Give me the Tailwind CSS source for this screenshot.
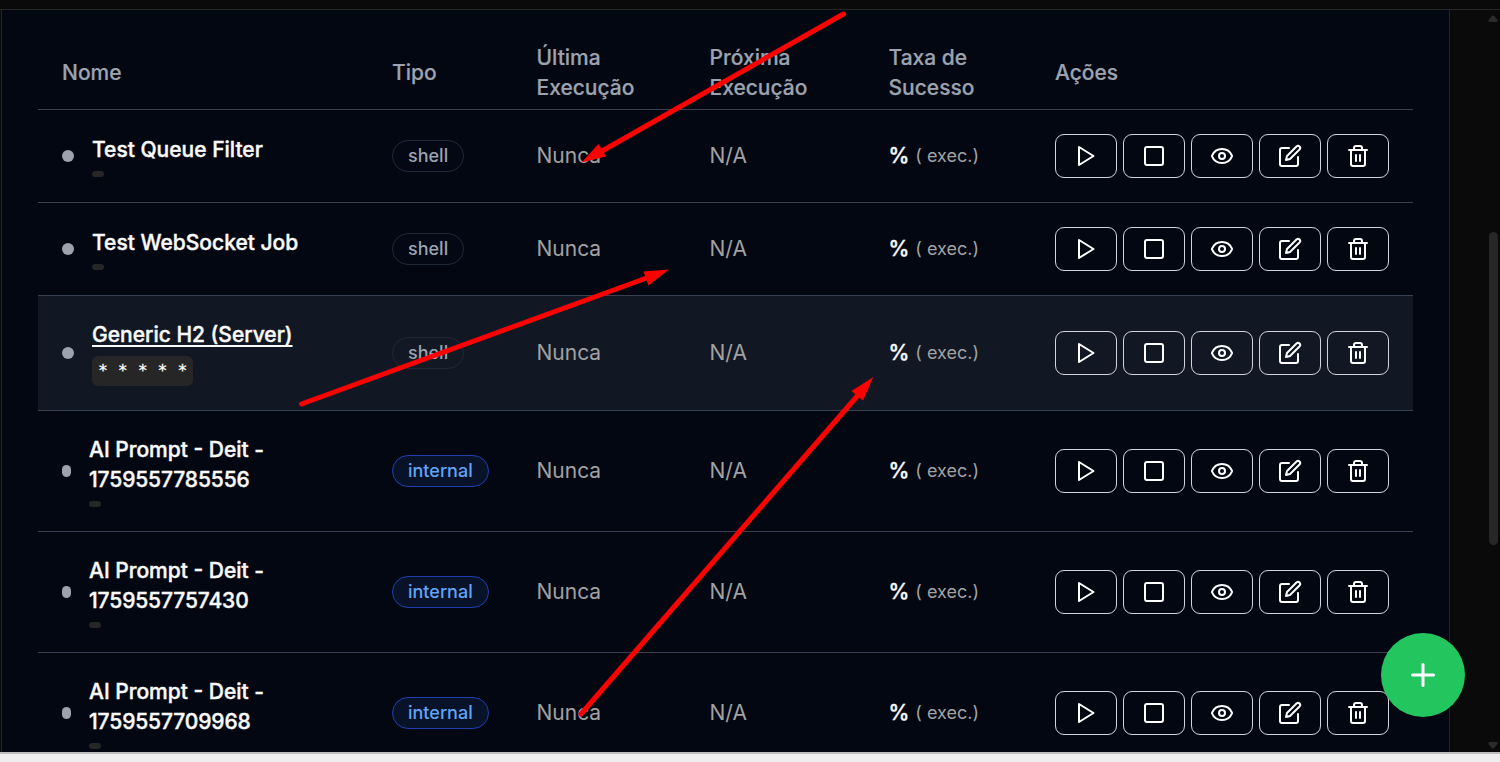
<!DOCTYPE html>
<html lang="pt-BR">
<head>
<meta charset="utf-8">
<title>Jobs</title>
<script src="https://cdn.jsdelivr.net/npm/@tailwindcss/browser@4"></script>
</head>
<body class="relative h-[762px] w-[1500px] overflow-hidden bg-[#0a0a0a] font-['Inter',sans-serif] text-[21px] leading-[30px] text-[#fafafa]">
<svg class="hidden">
  <g fill="none" stroke="currentColor" stroke-width="2" stroke-linecap="round" stroke-linejoin="round">
    <symbol id="play" viewBox="0 0 24 24"><polygon points="5 3 19.500 12 5 21 5 3"/></symbol>
    <symbol id="stop" viewBox="0 0 24 24"><rect width="18" height="18" x="3" y="3" rx="2"/></symbol>
    <symbol id="eye" viewBox="0 0 24 24"><path d="M2.062 12.348a1 1 0 0 1 0-.696 10.75 10.75 0 0 1 19.876 0 1 1 0 0 1 0 .696 10.75 10.75 0 0 1-19.876 0"/><circle cx="12" cy="12" r="3"/></symbol>
    <symbol id="edit" viewBox="0 0 24 24"><path d="M11 4H4a2 2 0 0 0-2 2v14a2 2 0 0 0 2 2h14a2 2 0 0 0 2-2v-7"/><path d="M18.500 2.500a2.121 2.121 0 0 1 3 3L12 15l-4 1 1-4Z"/></symbol>
    <symbol id="trash" viewBox="0 0 24 24"><path d="M3 6h18"/><path d="M19 6v14c0 1-1 2-2 2H7c-1 0-2-1-2-2V6"/><path d="M8 6V4c0-1 1-2 2-2h4c1 0 2 1 2 2v2"/><path d="M10 11v6"/><path d="M14 11v6"/></symbol>
  </g>
</svg>

<div class="flex h-[752px] flex-col overflow-hidden">
  <div class="h-[10px] shrink-0 border-b border-[#262628]"></div>
  <div class="flex h-[742px]">
    <main class="ml-px w-[1449px] shrink-0 overflow-hidden border-x border-[#1f242e] bg-[#030712] px-9 pt-[27px]">
      <div class="grid h-[73px] w-[1375px] grid-cols-[330px_144.5px_173px_179px_166.500px_382px] items-center border-b border-[#374151] font-medium text-[#9ca3af] [-webkit-text-stroke:0.2px]">
        <div class="px-6">Nome</div>
        <div class="px-6">Tipo</div>
        <div class="px-6">Última<br>Execução</div>
        <div class="px-6">Próxima<br>Execução</div>
        <div class="px-6">Taxa de<br>Sucesso</div>
        <div class="px-6">Ações</div>
      </div>
      <div id="rows"></div>
    </main>
    <div class="flex-1"></div>
    <div class="mr-px flex w-3 flex-col items-center pt-[5px] pb-[3px]">
      <svg class="h-[7px] w-[10px] shrink-0" viewBox="0 0 10 7"><path d="M4 .8Q5 0 6 .8L9.5 5Q10 7 8.500 7H1.500Q0 7 .5 5Z" fill="#2b2b2b"/></svg>
      <div class="mt-[210px] h-[313px] w-[9px] shrink-0 rounded-full bg-[#272727]"></div>
      <svg class="mt-auto h-[7px] w-[10px] shrink-0 rotate-180" viewBox="0 0 10 7"><path d="M4 .8Q5 0 6 .8L9.500 5Q10 7 8.500 7H1.500Q0 7 .5 5Z" fill="#2b2b2b"/></svg>
    </div>
  </div>
</div>
<footer class="h-[10px] border-t-2 border-[#bdbdbd] bg-[#eeeeee]"></footer>

<button class="absolute left-[1381px] top-[633px] flex size-[84px] items-center justify-center rounded-full bg-[#22c55e] text-white">
  <svg class="size-9" viewBox="0 0 24 24" fill="none" stroke="currentColor" stroke-width="2" stroke-linecap="round"><path d="M5 12h14M12 5v14"/></svg>
</button>

<svg class="pointer-events-none absolute left-0 top-0 h-[762px] w-[1500px]" viewBox="0 0 1500 762" fill="#ff0000" stroke="#ff0000" stroke-width="5" stroke-linecap="round">
  <path d="M843.500 14L602 151M301.500 404L648 277.500M581 714L859 394"/>
  <path stroke="none" d="M581.500 162.500L598.500 144L606 156.500ZM669 269.500L643.500 271.500L648.500 285.500ZM873.300 377L851.500 391L863 400.500Z"/>
</svg>

<script>
const jobs = [
  { name: 'Test Queue Filter', type: 'shell', height: 93 },
  { name: 'Test WebSocket Job', type: 'shell', height: 93 },
  { name: 'Generic H2 (Server)', type: 'shell', height: 115, cron: '* * * * *', hover: true },
  { name: 'AI Prompt - Deit -', id: '1759557785556', type: 'internal', height: 121 },
  { name: 'AI Prompt - Deit -', id: '1759557757430', type: 'internal', height: 121 },
  { name: 'AI Prompt - Deit -', id: '1759557709968', type: 'internal', height: 121 },
];
const badge = {
  shell: 'border-[#1f2937] bg-[#6b7280]/2 text-[#9ca3af]',
  internal: 'border-[#1e40af] bg-[#3b82f6]/10 text-[#60a5fa]',
};
const actions = ['play', 'stop', 'eye', 'edit', 'trash'].map(i =>
  `<button class="flex h-11 w-[62px] items-center justify-center rounded-[9px] border border-[#d1d5db] text-white"><svg class="size-6" fill="none" stroke="currentColor" stroke-width="2" stroke-linecap="round" stroke-linejoin="round"><use href="#${i}"/></svg></button>`).join('');
document.getElementById('rows').innerHTML = jobs.map(j => `
  <div class="grid w-[1375px] grid-cols-[330px_144.5px_173px_179px_166.500px_382px] items-center border-b border-[#374151] ${j.hover ? 'bg-[#111823]' : ''}" style="height:${j.height}px">
    <div class="flex items-center gap-[18px] px-6">
      <span class="h-3 shrink-0 rounded-full bg-[#9ca3af] ${j.id ? 'w-[9px]' : 'w-3'}"></span>
      <div class="whitespace-nowrap">
        <div class="font-medium [-webkit-text-stroke:0.4px] ${j.hover ? 'underline underline-offset-[3px] decoration-[1.500px] [text-decoration-skip-ink:none]' : ''}">${j.name}${j.id ? `<br><span class="tracking-[-0.12px]">${j.id}</span>` : ''}</div>
        ${j.cron
          ? `<code class="mt-1.5 block h-[30px] w-[101px] rounded-md bg-[#262626] px-1.5 pt-[3px] font-['DejaVu_Sans_Mono',monospace] text-[16.5px] leading-6 [-webkit-text-stroke:0.3px]">${j.cron}</code>`
          : `<code class="mt-1.5 block h-1.5 w-3 rounded-[3px] bg-[#262626]"></code>`}
      </div>
    </div>
    <div class="flex px-6"><span class="h-8 rounded-full border px-[15px] text-[18px] leading-[30px] font-medium ${badge[j.type]}">${j.type}</span></div>
    <div class="px-6 text-[#a1a1a1]">Nunca</div>
    <div class="px-6 text-[#a1a1a1]">N/A</div>
    <div class="flex items-center gap-[6px] whitespace-nowrap px-6"><span class="font-medium [-webkit-text-stroke:0.4px]">%</span><span class="text-[18px] text-[#a1a1a1]">( exec.)</span></div>
    <div class="flex gap-1.5 px-6">${actions}</div>
  </div>`).join('');
</script>
</body>
</html>
